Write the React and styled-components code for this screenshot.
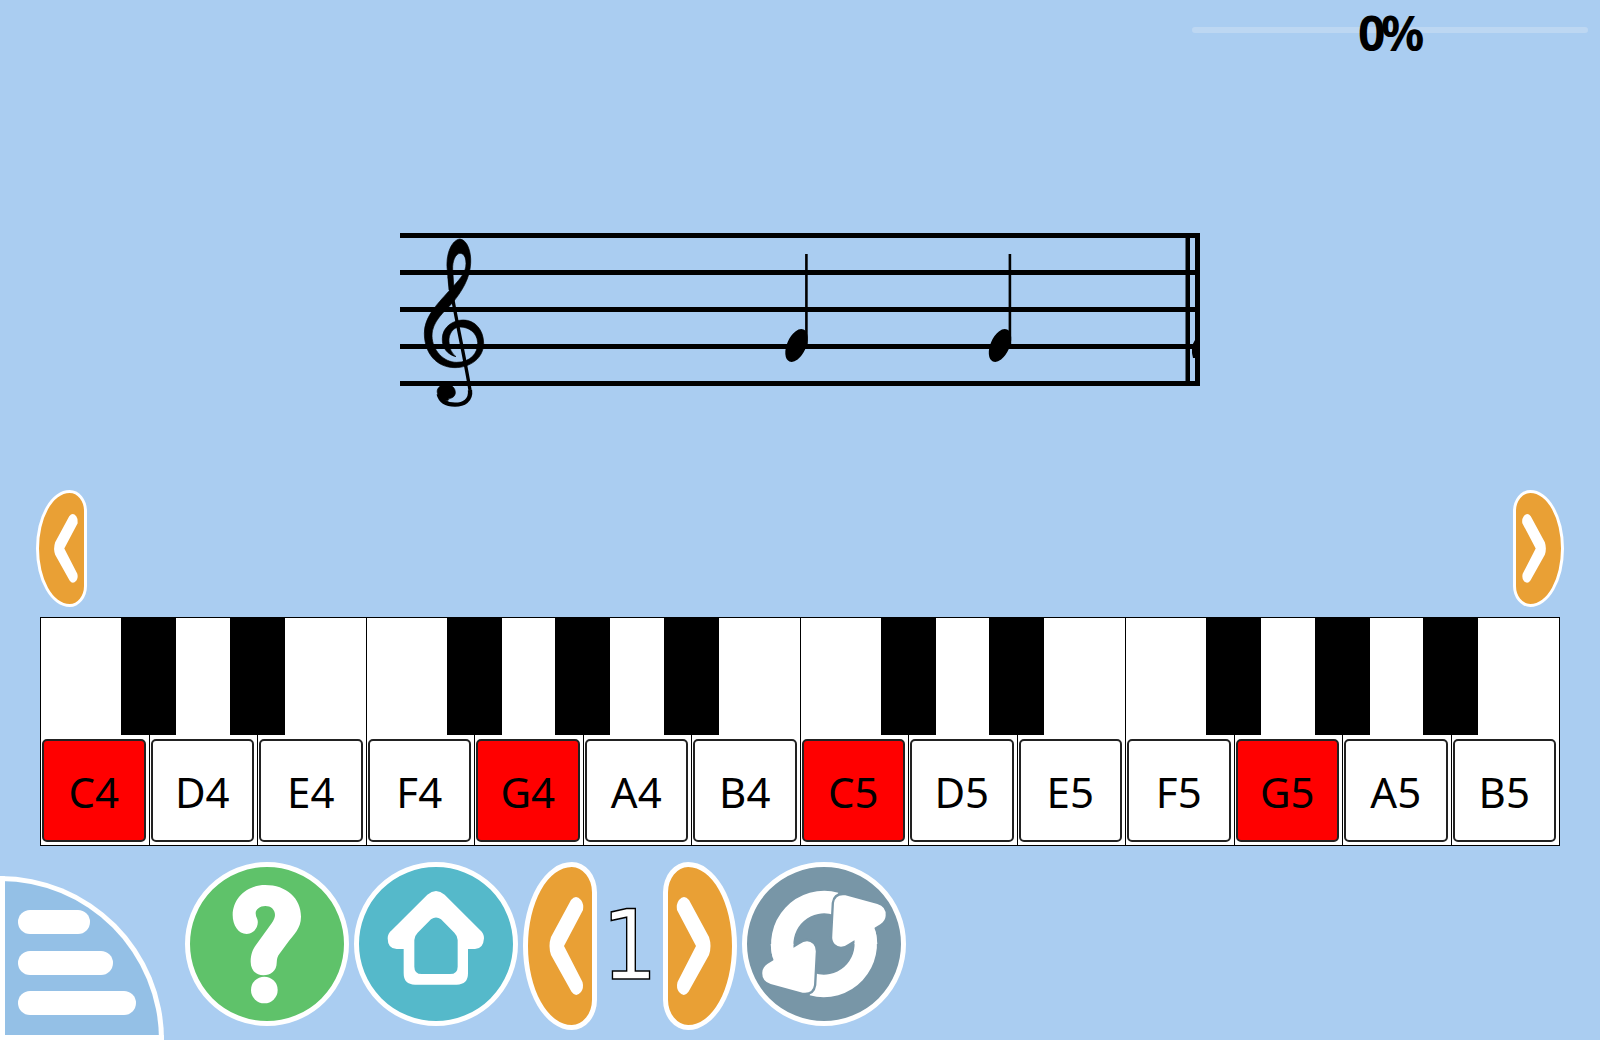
import React from "react"
import styled, { createGlobalStyle } from "styled-components"

const GlobalStyle = createGlobalStyle`
  * {
    box-sizing: border-box;
  }
  html, body {
    margin: 0;
    padding: 0;
    background: #aacdf1;
  }
`

const Page = styled.div`
  width: 1600px;
  height: 1040px;
  overflow: hidden;
  display: flex;
  flex-direction: column;
  background: #aacdf1;
  font-family: "Noto Sans", "DejaVu Sans", sans-serif;
`

const Header = styled.div`
  height: 64px;
  padding: 27px 12px 0 0;
  display: flex;
  justify-content: flex-end;
  align-items: flex-start;
`

const Progress = styled.div`
  position: relative;
  width: 396px;
  height: 6px;
  border-radius: 3px;
  background: #bdd7f2;
`

const Percent = styled.span`
  position: absolute;
  left: -2px;
  right: 0;
  top: -24px;
  text-align: center;
  font-size: 48px;
  line-height: 60px;
  font-weight: 700;
  letter-spacing: -4.5px;
  color: #000;
`

const Staff = styled.svg`
  display: block;
  width: 800px;
  height: 180px;
  margin: 166px auto 0;
`

const ArrowRow = styled.div`
  margin-top: 80px;
  padding: 0 36px;
  display: flex;
  justify-content: space-between;
`

const Arrow = styled.button`
  padding: 0;
  flex: none;
  width: ${({ $small }) => ($small ? "51px" : "74px")};
  height: ${({ $small }) => ($small ? "117px" : "168px")};
  border: ${({ $small }) => ($small ? "3px" : "5px")} solid #fff;
  border-radius: 66% 34% 34% 66% / 50% 18% 18% 50%;
  background: #e9a035;
  transform: ${({ $flip }) => ($flip ? "scaleX(-1)" : "none")};
  svg {
    display: block;
    width: 100%;
    height: 100%;
  }
`

const Piano = styled.div`
  margin: 10px 40px 0;
  height: 229px;
  display: flex;
  border: 1px solid #000;
  background: #fff;
`

const WhiteKey = styled.div`
  position: relative;
  flex: 1;
  display: flex;
  align-items: flex-end;
  padding: 0 3px 3px 1px;
  border-right: 1px solid #000;
  &:last-child {
    border-right: 0;
  }
`

const BlackKey = styled.div`
  position: absolute;
  z-index: 1;
  top: 0;
  right: -27.9px;
  width: 55px;
  height: 117px;
  background: #000;
`

const KeyLabel = styled.div`
  width: 100%;
  height: 103px;
  padding-top: 2px;
  display: flex;
  align-items: center;
  justify-content: center;
  border: 2px solid #222;
  border-radius: 5px;
  font-size: 42px;
  color: #000;
  background: ${({ $root }) => ($root ? "#ff0000" : "#fff")};
`

const Toolbar = styled.div`
  margin-top: 16px;
  display: flex;
  align-items: flex-start;
  gap: 5px;
`

const Menu = styled.div`
  width: 164px;
  height: 164px;
  margin: 14px 16px 0 0;
  padding: 29px 0 0 13px;
  display: flex;
  flex-direction: column;
  gap: 16.5px;
  border: 5px solid #fff;
  border-top-right-radius: 100%;
  background: #94c0e6;
`

const MenuBar = styled.span`
  display: block;
  width: ${({ $width }) => $width}px;
  height: 24px;
  border-radius: 12px;
  background: #fff;
`

const RoundButton = styled.button`
  padding: 0;
  flex: none;
  width: 164px;
  height: 164px;
  border: 5px solid #fff;
  border-radius: 50%;
  background: ${({ $color }) => $color};
  svg {
    display: block;
    width: 100%;
    height: 100%;
  }
`

const PageNumber = styled.div`
  width: 56px;
  height: 168px;
  display: flex;
  align-items: center;
  justify-content: center;
  font-family: "DejaVu Sans", sans-serif;
  font-size: 96px;
  line-height: 1;
  color: #fff;
  -webkit-text-stroke: 1.5px #000;
  span {
    display: inline-block;
    transform: scaleX(0.92);
  }
`

const keys = ["C4", "D4", "E4", "F4", "G4", "A4", "B4", "C5", "D5", "E5", "F5", "G5", "A5", "B5"]

const resetBg = "#7896a7"

const Chevron = () => (
  <svg viewBox="0 0 64 158">
    <path
      fill="#fff"
      d="M43 33Q48 27 53 33Q56 37 55 43L36 79L54.5 115Q56 121 53 125Q48 131 43.5 124.7L23 88Q20 79 23 70Z"
    />
  </svg>
)

const Clef = () => (
  <g transform="translate(380 210) scale(0.3333)" stroke="#000" strokeWidth="2">
    <path d="M240 87C262 90 274 125 272 160C270 205 245 245 218 278C195 303 155 335 156 378C157 420 190 457 230 457C270 457 295 430 293 397C291 367 265 351 240 351C218 351 205 375 207 395C208 415 215 430 228 440C205 435 185 415 187 385C188 350 220 330 250 330C285 330 311 360 311 400C311 445 270 473 225 473C170 473 133 430 133 370C133 320 170 285 205 245C235 212 259 190 258 160C258 140 250 130 240 130C225 132 217 155 218 178L222 240L207 240L201 170C199 130 215 90 240 87Z" />
    <path
      d="M208 200C212 240 222 290 238 370C250 430 262 490 270 540"
      fill="none"
      strokeWidth="10"
    />
    <path
      d="M270 540C274 572 250 584 225 584C200 584 182 575 176 552"
      fill="none"
      strokeWidth="13"
    />
    <path d="M198 523C215 523 227 535 226 549C225 560 215 566 204 566C212 572 195 574 184 566C174 558 170 548 172 540C175 530 186 523 198 523Z" />
  </g>
)

const Note = ({ x }) => (
  <g>
    <ellipse cx={x} cy="345.5" rx="17.5" ry="9.5" transform={`rotate(-66 ${x} 345.5)`} />
    <rect x={x + 8.6} y="254" width="2.6" height="92" />
  </g>
)

const HelpIcon = () => (
  <svg viewBox="570 51 462 462">
    <path
      fill="#fff"
      d="M795 105C860 105 903 145 903 200C903 235 880 255 865 275L838 312Q830 322 830 340C830 362 812 376 790 376C768 376 752 360 752 335C752 310 760 295 770 282L815 220Q825 205 825 195C825 178 812 168 796 168C780 168 767 178 767 190Q767 200 772 208C778 225 765 252 740 252C715 252 698 225 698 195C698 145 740 105 795 105Z"
    />
    <circle cx="793" cy="420" r="40" fill="#fff" />
  </svg>
)

const HomeIcon = () => (
  <svg viewBox="27 51 462 462">
    <path
      fill="#fff"
      fillRule="evenodd"
      d="M232 134Q258 112 284 134L390 240Q402 250 402 265Q400 297 375 297L354 297L354 370Q354 404 320 404L195 404Q161 404 161 370L161 297L140 297Q113 297 113 265Q113 250 126 240ZM243 208Q258 197 273 208L313 248Q323 258 323 270L323 350Q323 372 300 372L215 372Q193 372 193 350L193 270Q193 258 203 248Z"
    />
  </svg>
)

const head =
  "M352 342L448 283Q472 265 490 282Q499 292 497 310L492 405Q488 432 458 428L362 402Q335 394 337 367Q338 352 352 342Z"

// draws a piece of the reset icon and its copy on the opposite side
const Both = ({ children }) => (
  <>
    {children}
    <g transform="rotate(180 522 282)">{children}</g>
  </>
)

const ResetIcon = () => (
  <svg viewBox="291 51 462 462">
    <Both>
      <path fill="#fff" d="M565 128A160 160 0 0 0 372 335L432 300A92 92 0 0 1 552 195Z" />
    </Both>
    <Both>
      <path d={head} fill={resetBg} stroke={resetBg} strokeWidth="14" />
    </Both>
    <Both>
      <path fill="#fff" d="M362 282A160 160 0 0 0 372 335L432 300A92 92 0 0 1 430 282Z" />
      <path fill="#fff" d={head} />
    </Both>
  </svg>
)

const App = () => (
  <Page>
    <GlobalStyle />
    <Header>
      <Progress>
        <Percent>0%</Percent>
      </Progress>
    </Header>
    <Staff viewBox="400 230 800 180">
      {[233, 270, 307, 344, 381].map((y) => (
        <rect key={y} x="400" y={y} width="800" height="5" />
      ))}
      <rect x="1185.5" y="233" width="4.5" height="153" />
      <rect x="1195" y="233" width="5" height="153" />
      <path d="M1195 340Q1190 347 1193 358L1195 358Z" />
      <Clef />
      <Note x={796.5} />
      <Note x={1000} />
    </Staff>
    <ArrowRow>
      <Arrow $small>
        <Chevron />
      </Arrow>
      <Arrow $small $flip>
        <Chevron />
      </Arrow>
    </ArrowRow>
    <Piano>
      {keys.map((name) => (
        <WhiteKey key={name}>
          {!/^[EB]/.test(name) && <BlackKey />}
          <KeyLabel $root={/^[CG]/.test(name)}>{name}</KeyLabel>
        </WhiteKey>
      ))}
    </Piano>
    <Toolbar>
      <Menu>
        <MenuBar $width={72} />
        <MenuBar $width={95} />
        <MenuBar $width={118} />
      </Menu>
      <RoundButton $color="#5fc26a">
        <HelpIcon />
      </RoundButton>
      <RoundButton $color="#55b9ca">
        <HomeIcon />
      </RoundButton>
      <Arrow>
        <Chevron />
      </Arrow>
      <PageNumber>
        <span>1</span>
      </PageNumber>
      <Arrow $flip>
        <Chevron />
      </Arrow>
      <RoundButton $color={resetBg}>
        <ResetIcon />
      </RoundButton>
    </Toolbar>
  </Page>
)

export default App
